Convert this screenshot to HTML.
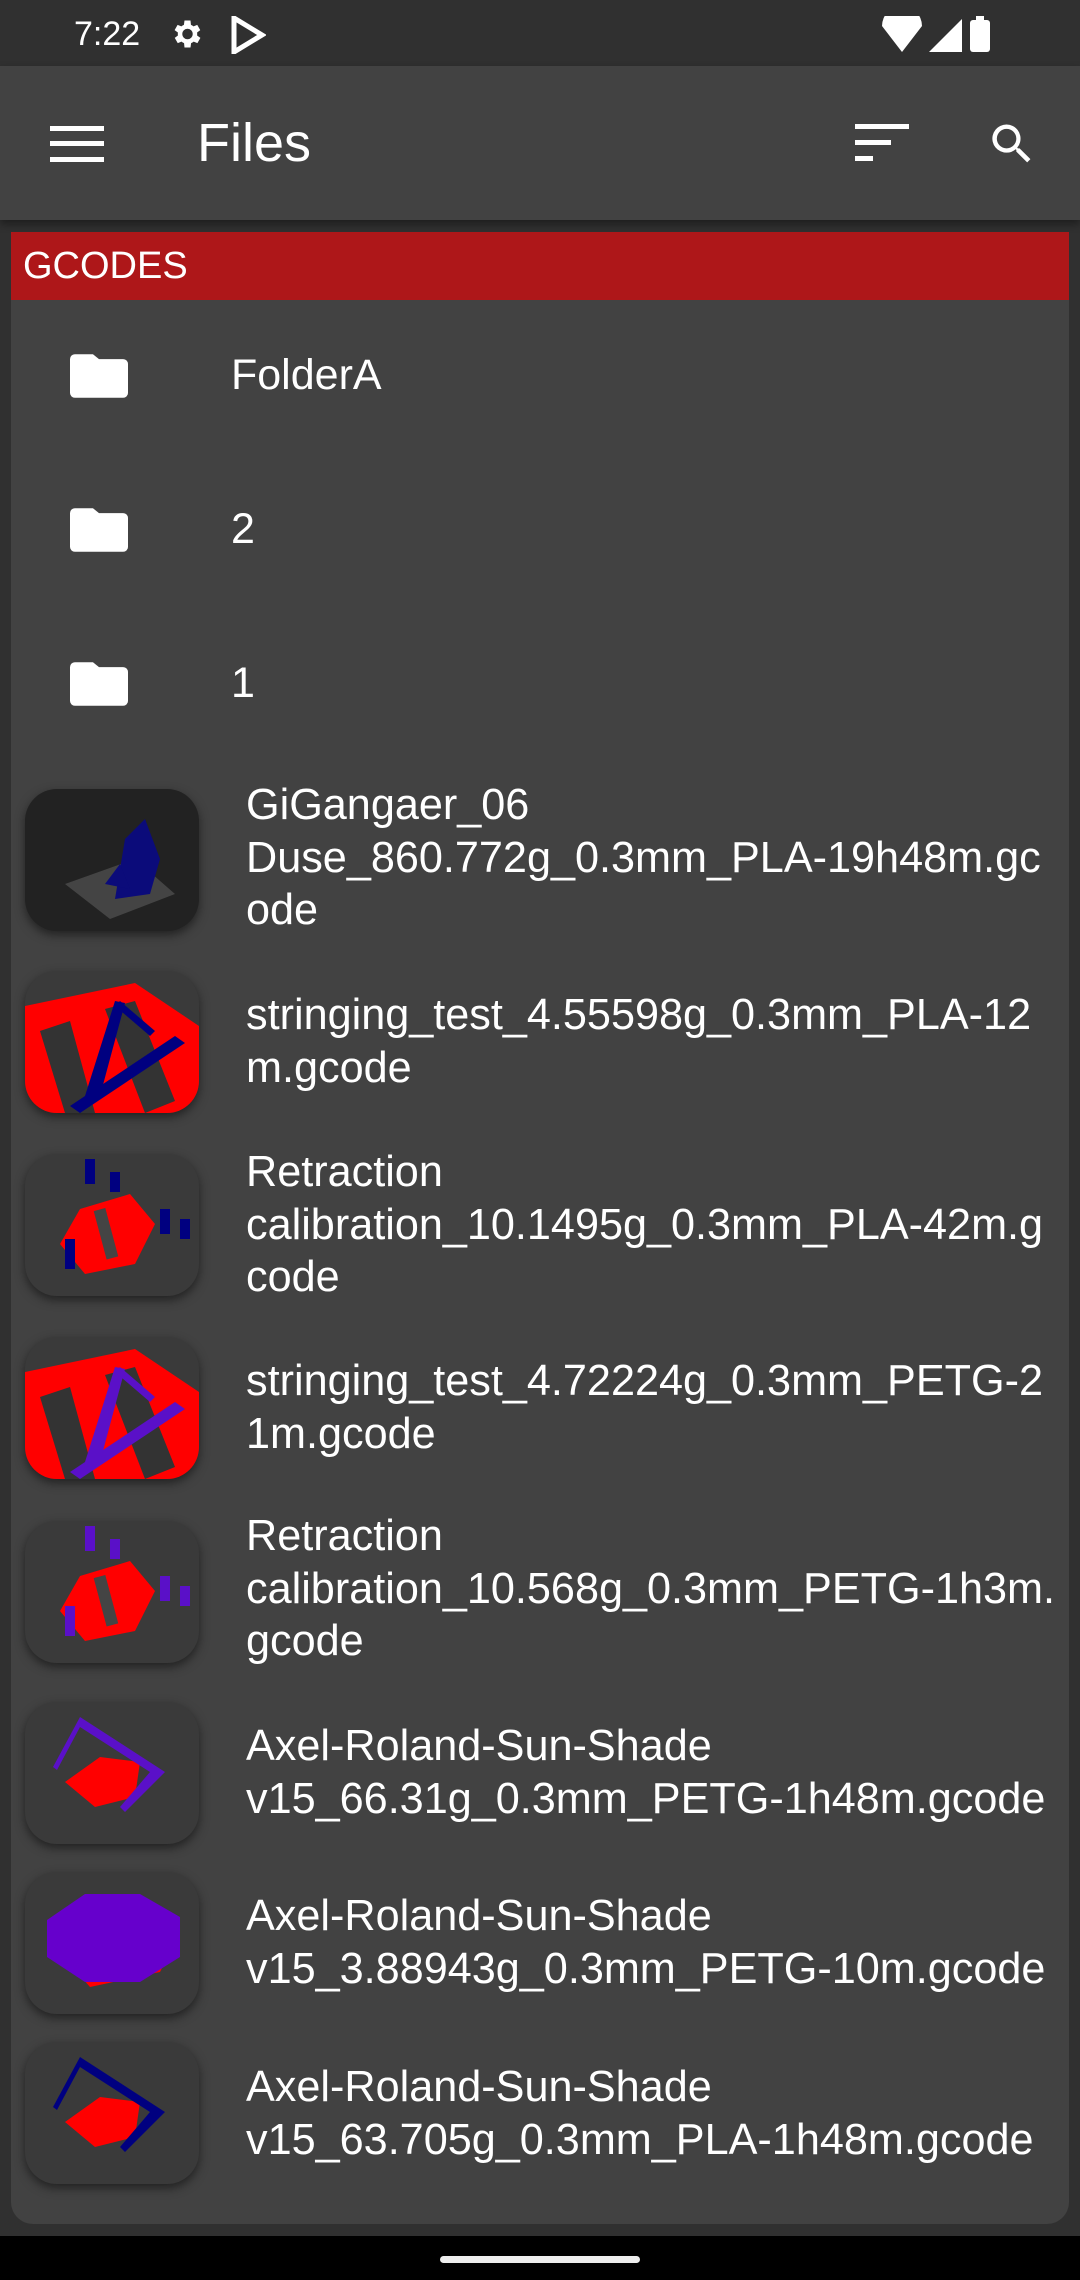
<!DOCTYPE html>
<html><head><meta charset="utf-8"><style>
*{margin:0;padding:0;box-sizing:border-box}
body{width:1080px;height:2280px;background:#303030;position:relative;overflow:hidden;font-family:"Liberation Sans",Roboto,sans-serif;color:#fff}
.abs{position:absolute}
.sb{left:0;top:0;width:1080px;height:66px;background:#303030}
.tb{left:0;top:66px;width:1080px;height:154px;background:#424242;box-shadow:0 4px 8px rgba(0,0,0,.4)}
.card{left:11px;top:232px;width:1058px;height:1992px;background:#424242;border-radius:0 0 22px 22px}
.hdr{left:11px;top:232px;width:1058px;height:68px;background:#ae1719;font-size:38px;line-height:68px;padding-left:12px}
.ft{left:231px;font-size:43px;line-height:52px}
.tx{left:246px;font-size:43.2px;line-height:52.5px;white-space:nowrap}
.th{left:25px;width:174px;height:142px;border-radius:32px;overflow:hidden;box-shadow:0 4px 10px rgba(0,0,0,.5);background:#3a3a3a}
.nav{left:0;top:2236px;width:1080px;height:44px;background:#000}
</style></head><body>
<div class="abs sb"></div>
<div class="abs" style="left:74px;top:12px;font-size:34px;line-height:44px">7:22</div>
<svg class="abs" style="left:168px;top:16px" width="36" height="36" viewBox="0 0 24 24"><path fill="#fff" d="M19.4 13a7.5 7.5 0 000-2l2.1-1.6-2-3.5-2.5 1a7 7 0 00-1.7-1L15 3h-4l-.4 2.9a7 7 0 00-1.7 1l-2.5-1-2 3.5L6.6 11a7.5 7.5 0 000 2l-2.1 1.6 2 3.5 2.5-1a7 7 0 001.7 1L11 21h4l.4-2.9a7 7 0 001.7-1l2.5 1 2-3.5zM13 15.5a3.5 3.5 0 110-7 3.5 3.5 0 010 7z"/></svg>
<svg class="abs" style="left:230px;top:16px" width="36" height="38" viewBox="0 0 18 19"><path fill="none" stroke="#fff" stroke-width="2.5" d="M2 1v17l14-8.5z"/></svg>
<svg class="abs" style="left:880px;top:16px" width="110" height="38" viewBox="0 0 110 38"><path fill="#fff" d="M2 10a20 20 0 0140 0L22 36z"/><path fill="#fff" d="M49 36L82 3v33z"/><rect x="90" y="4" width="20" height="32" rx="3" fill="#fff"/><rect x="96" y="0" width="8" height="5" fill="#fff"/></svg>
<div class="abs tb"></div>
<svg class="abs" style="left:50px;top:126px" width="54" height="36" viewBox="0 0 54 36"><rect y="0" width="54" height="5" fill="#fff"/><rect y="15" width="54" height="5" fill="#fff"/><rect y="31" width="54" height="5" fill="#fff"/></svg>
<div class="abs" style="left:197px;top:108px;font-size:54px;line-height:70px;font-weight:500">Files</div>
<svg class="abs" style="left:855px;top:124px" width="54" height="38" viewBox="0 0 54 38"><rect width="54" height="5" fill="#fff"/><rect y="16" width="36" height="5" fill="#fff"/><rect y="32" width="18" height="5" fill="#fff"/></svg>
<svg class="abs" style="left:986px;top:118px" width="52" height="52" viewBox="0 0 24 24"><path fill="#fff" d="M15.5 14h-.8l-.3-.3A6.5 6.5 0 109.5 16a6.5 6.5 0 004.2-1.6l.3.3v.8l5 5 1.5-1.5zm-6 0a4.5 4.5 0 110-9 4.5 4.5 0 010 9z"/></svg>
<div class="abs card"></div>
<div class="abs hdr">GCODES</div>

<svg class="abs" style="left:70px;top:354px" width="58" height="44" viewBox="0 0 24 18"><path fill="#fff" d="M9.5 0H2A2 2 0 000 2v14a2 2 0 002 2h20a2 2 0 002-2V4a2 2 0 00-2-2H12z"/></svg>
<div class="abs ft" style="top:349px">FolderA</div>
<svg class="abs" style="left:70px;top:508px" width="58" height="44" viewBox="0 0 24 18"><path fill="#fff" d="M9.5 0H2A2 2 0 000 2v14a2 2 0 002 2h20a2 2 0 002-2V4a2 2 0 00-2-2H12z"/></svg>
<div class="abs ft" style="top:503px">2</div>
<svg class="abs" style="left:70px;top:662px" width="58" height="44" viewBox="0 0 24 18"><path fill="#fff" d="M9.5 0H2A2 2 0 000 2v14a2 2 0 002 2h20a2 2 0 002-2V4a2 2 0 00-2-2H12z"/></svg>
<div class="abs ft" style="top:657px">1</div>

<div class="abs th" style="top:789px;background:#222"><svg width="174" height="142"><polygon points="40,95 110,70 150,105 85,130" fill="#444"/><path d="M90 110 L100 50 L120 30 L135 70 L125 105 Z" fill="#0b0b7a"/><path d="M80 95 L95 75 L105 100 Z" fill="#0b0b7a"/></svg></div>
<div class="abs tx" style="top:779px">GiGangaer_06<br>Duse_860.772g_0.3mm_PLA-19h48m.gc<br>ode</div>

<div class="abs th" style="top:971px"><svg width="174" height="142"><polygon points="0,35 110,12 174,55 174,142 0,142" fill="#f00"/><polygon points="15,60 45,50 70,142 40,142" fill="#333"/><polygon points="80,38 110,30 150,130 120,142" fill="#333"/><polygon points="45,135 150,65 160,72 55,142" fill="#000080"/><polygon points="60,125 90,30 100,32 75,125" fill="#000080"/><polygon points="95,30 130,60 125,65 90,35" fill="#000080"/></svg></div>
<div class="abs tx" style="top:989px">stringing_test_4.55598g_0.3mm_PLA-12<br>m.gcode</div>

<div class="abs th" style="top:1154px"><svg width="174" height="142"><polygon points="55,55 105,40 130,70 110,110 60,120 35,90" fill="#f00"/><rect x="75" y="55" width="12" height="50" fill="#444" transform="rotate(-15 80 80)"/><g fill="#000080"><rect x="60" y="5" width="10" height="25"/><rect x="85" y="18" width="10" height="20"/><rect x="40" y="85" width="10" height="30"/><rect x="135" y="55" width="10" height="25"/><rect x="155" y="65" width="10" height="20"/></g></svg></div>
<div class="abs tx" style="top:1146px">Retraction<br>calibration_10.1495g_0.3mm_PLA-42m.g<br>code</div>

<div class="abs th" style="top:1337px"><svg width="174" height="142"><polygon points="0,35 110,12 174,55 174,142 0,142" fill="#f00"/><polygon points="15,60 45,50 70,142 40,142" fill="#333"/><polygon points="80,38 110,30 150,130 120,142" fill="#333"/><polygon points="45,135 150,65 160,72 55,142" fill="#5a10c8"/><polygon points="60,125 90,30 100,32 75,125" fill="#5a10c8"/><polygon points="95,30 130,60 125,65 90,35" fill="#5a10c8"/></svg></div>
<div class="abs tx" style="top:1355px">stringing_test_4.72224g_0.3mm_PETG-2<br>1m.gcode</div>

<div class="abs th" style="top:1521px"><svg width="174" height="142"><polygon points="55,55 105,40 130,70 110,110 60,120 35,90" fill="#f00"/><rect x="75" y="55" width="12" height="50" fill="#444" transform="rotate(-15 80 80)"/><g fill="#5a10c8"><rect x="60" y="5" width="10" height="25"/><rect x="85" y="18" width="10" height="20"/><rect x="40" y="85" width="10" height="30"/><rect x="135" y="55" width="10" height="25"/><rect x="155" y="65" width="10" height="20"/></g></svg></div>
<div class="abs tx" style="top:1510px">Retraction<br>calibration_10.568g_0.3mm_PETG-1h3m.<br>gcode</div>

<div class="abs th" style="top:1702px"><svg width="174" height="142"><polygon points="40,80 75,55 115,60 110,95 70,105" fill="#f00"/><polygon points="28,65 55,15 140,70 100,110 95,105 125,70 55,25 32,68" fill="#5a10c8"/></svg></div>
<div class="abs tx" style="top:1720px">Axel-Roland-Sun-Shade<br>v15_66.31g_0.3mm_PETG-1h48m.gcode</div>

<div class="abs th" style="top:1872px"><svg width="174" height="142"><polygon points="30,75 45,35 110,30 155,60 135,100 65,115" fill="#f00"/><polygon points="22,48 60,22 115,22 155,45 155,85 115,110 60,110 22,85" fill="#6600cc"/></svg></div>
<div class="abs tx" style="top:1890px">Axel-Roland-Sun-Shade<br>v15_3.88943g_0.3mm_PETG-10m.gcode</div>

<div class="abs th" style="top:2042px"><svg width="174" height="142"><polygon points="40,80 75,55 115,60 110,95 70,105" fill="#f00"/><polygon points="28,65 55,15 140,70 100,110 95,105 125,70 55,25 32,68" fill="#000080"/></svg></div>
<div class="abs tx" style="top:2061px">Axel-Roland-Sun-Shade<br>v15_63.705g_0.3mm_PLA-1h48m.gcode</div>

<div class="abs nav"></div>
<div class="abs" style="left:440px;top:2256px;width:200px;height:7px;border-radius:4px;background:#eee"></div>
</body></html>
